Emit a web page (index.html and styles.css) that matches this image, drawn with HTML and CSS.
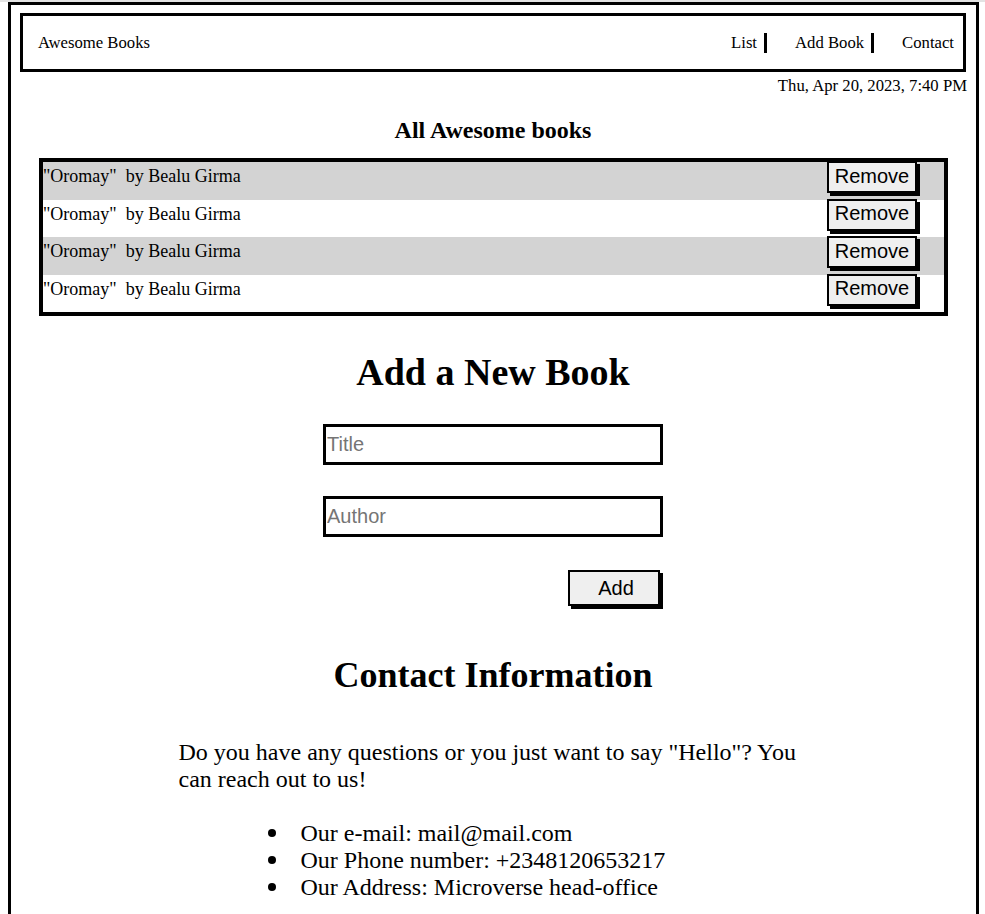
FILE: index.html
```html
<!DOCTYPE html>
<html lang="en">
<head>
<meta charset="utf-8">
<title>Awesome Books</title>
<link rel="stylesheet" href="styles.css">
</head>
<body>
<div class="page">
  <header class="topbar">
    <span class="brand">Awesome Books</span>
    <nav>
      <ul class="nav">
        <li class="nav-item"><a class="nav-link" href="#list">List</a></li>
        <li class="nav-item"><a class="nav-link" href="#add">Add Book</a></li>
        <li class="nav-item nav-last"><a class="nav-link" href="#contact">Contact</a></li>
      </ul>
    </nav>
  </header>
  <div class="date">Thu, Apr 20, 2023, 7:40 PM</div>

  <section class="books" id="list">
    <h2 class="books-title">All Awesome books</h2>
    <ul class="book-list">
      <li class="book-row row-gray"><span class="book-text">"Oromay"&nbsp; by Bealu Girma</span><button class="remove-btn">Remove</button></li>
      <li class="book-row"><span class="book-text">"Oromay"&nbsp; by Bealu Girma</span><button class="remove-btn">Remove</button></li>
      <li class="book-row row-gray"><span class="book-text">"Oromay"&nbsp; by Bealu Girma</span><button class="remove-btn">Remove</button></li>
      <li class="book-row"><span class="book-text">"Oromay"&nbsp; by Bealu Girma</span><button class="remove-btn">Remove</button></li>
    </ul>
  </section>

  <section class="add" id="add">
    <h1 class="add-title">Add a New Book</h1>
    <form class="add-form">
      <input class="field" type="text" placeholder="Title">
      <input class="field field-author" type="text" placeholder="Author">
      <button class="add-btn" type="button">Add</button>
    </form>
  </section>

  <section class="contact" id="contact">
    <h1 class="contact-title">Contact Information</h1>
    <p class="contact-text">Do you have any questions or you just want to say "Hello"? You can reach out to us!</p>
    <ul class="contact-list">
      <li class="contact-item">Our e-mail: mail@mail.com</li>
      <li class="contact-item">Our Phone number: +2348120653217</li>
      <li class="contact-item">Our Address: Microverse head-office</li>
    </ul>
  </section>
</div>
</body>
</html>
```
FILE: styles.css
```css
html {
  border-top: 2px solid #e3e3e3;
  background: #fff;
}

body {
  margin: 0 6px 0 8px;
  font-family: "Liberation Serif", "Times New Roman", serif;
  color: #000;
}

.page {
  border: 3px solid #000;
  border-bottom: none;
  padding: 8px 10px 80px 9px;
}

.topbar {
  box-sizing: border-box;
  height: 59px;
  border: 3px solid #000;
  display: flex;
  align-items: center;
  justify-content: space-between;
  padding: 0 9px 0 15px;
  font-size: 16.7px;
}

.nav {
  display: flex;
  list-style: none;
  margin: 0;
  padding: 0;
}

.nav-item {
  margin-left: 28px;
  padding-right: 7px;
  border-right: 3px solid #000;
  line-height: 20px;
}

.nav-item:first-child {
  margin-left: 0;
}

.nav-last {
  border-right: none;
  padding-right: 0;
}

.nav-link {
  color: #000;
  text-decoration: none;
}

.date {
  margin-top: 4px;
  margin-right: -1px;
  line-height: 20px;
  font-size: 16.7px;
  text-align: right;
}

.books-title {
  margin: 22px 0 0;
  font-size: 24px;
  line-height: 24px;
  text-align: center;
}

.book-list {
  list-style: none;
  margin: 16px 18px 0 19px;
  padding: 0;
  border: 4px solid #000;
}

.book-row {
  box-sizing: border-box;
  height: 37.5px;
  display: flex;
  justify-content: space-between;
  align-items: flex-start;
  font-size: 18px;
}

.row-gray {
  background: #d3d3d3;
}

.book-text {
  margin-top: 4px;
  line-height: 20px;
}

.remove-btn {
  box-sizing: border-box;
  width: 90px;
  height: 32px;
  margin: -1px 27px 0 0;
  padding: 0 0 2px;
  font-family: "Liberation Sans", Arial, sans-serif;
  font-size: 20px;
  color: #000;
  background: #efefef;
  border: 2px solid #000;
  box-shadow: 3px 3px 0 #000;
}

.add-title {
  margin: 34px 0 0;
  font-size: 38px;
  line-height: 44px;
  text-align: center;
}

.add-form {
  width: 340px;
  margin: 30px auto 0;
  display: flex;
  flex-direction: column;
}

.field {
  box-sizing: border-box;
  width: 340px;
  height: 41px;
  border: 3px solid #000;
  padding: 0 1px;
  font-family: "Liberation Sans", Arial, sans-serif;
  font-size: 20px;
  outline: none;
}

.field::placeholder {
  color: #757575;
}

.field-author {
  margin-top: 31px;
}

.add-btn {
  box-sizing: border-box;
  align-self: flex-end;
  width: 92px;
  height: 36px;
  margin: 33px 3px 0 0;
  padding: 0 0 0 4px;
  font-family: "Liberation Sans", Arial, sans-serif;
  font-size: 20px;
  color: #000;
  background: #efefef;
  border: 2px solid #000;
  box-shadow: 3px 3px 0 #000;
}

.contact-title {
  margin: 48px 0 0;
  font-size: 36px;
  line-height: 42px;
  text-align: center;
}

.contact-text {
  width: 629px;
  margin: 43px auto 0;
  font-size: 24px;
  line-height: 27px;
}

.contact-list {
  width: 629px;
  box-sizing: border-box;
  margin: 27px auto 0;
  padding-left: 122px;
  list-style: none;
  font-size: 24px;
  line-height: 27px;
}

.contact-item::before {
  content: "";
  display: inline-block;
  width: 8px;
  height: 8px;
  border-radius: 50%;
  background: #000;
  margin-left: -33px;
  margin-right: 25px;
  vertical-align: 4px;
}
```
